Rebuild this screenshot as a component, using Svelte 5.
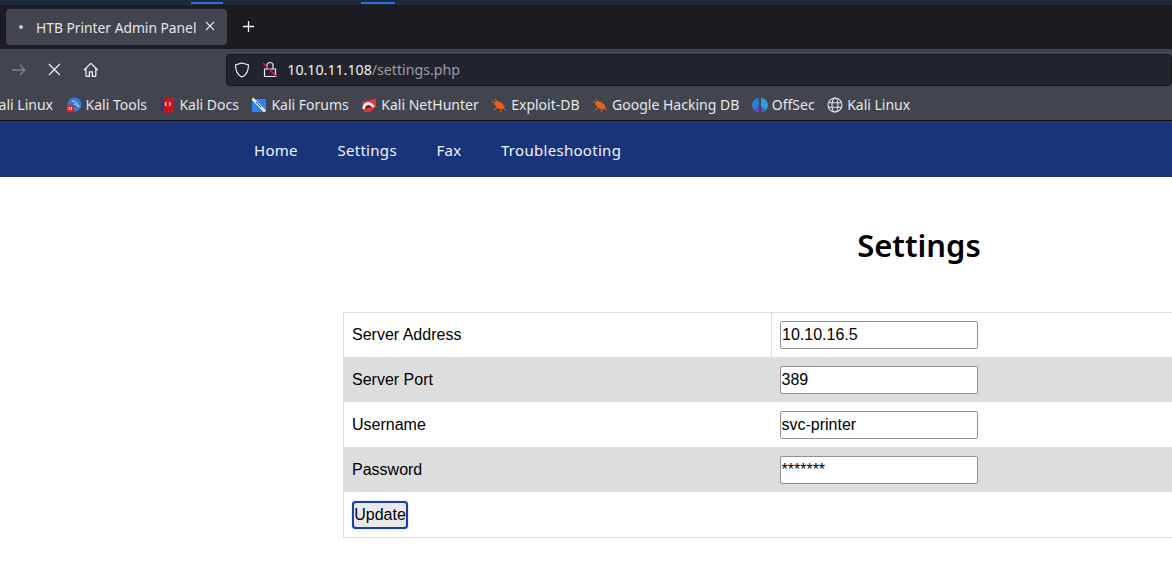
<script>
  const bookmarks = [
    { label: "Kali Tools", icon: "tools" },
    { label: "Kali Docs", icon: "docs" },
    { label: "Kali Forums", icon: "forums" },
    { label: "Kali NetHunter", icon: "nethunter" },
    { label: "Exploit-DB", icon: "bug" },
    { label: "Google Hacking DB", icon: "bug" },
    { label: "OffSec", icon: "offsec" },
    { label: "Kali Linux", icon: "globe" },
  ];
  const links = ["Home", "Settings", "Fax", "Troubleshooting"];
  const fields = [
    { label: "Server Address", value: "10.10.16.5", type: "text" },
    { label: "Server Port", value: "389", type: "text" },
    { label: "Username", value: "svc-printer", type: "text" },
    { label: "Password", value: "*******", type: "text" },
  ];
</script>

<div class="page">
  <div class="strip">
    <span class="mark first"></span>
    <span class="mark second"></span>
  </div>

  <div class="tabbar">
    <div class="tab">
      <span class="dot"></span>
      <span class="tab-title">HTB Printer Admin Panel</span>
      <svg class="tab-close" viewBox="0 0 10 10"><path d="M1 1l8 8M9 1l-8 8" /></svg>
    </div>
    <svg class="newtab" viewBox="0 0 14 14"><path d="M7 1v12M1 7h12" /></svg>
  </div>

  <div class="toolbar">
    <svg class="tool forward" viewBox="0 0 16 16"><path d="M1 8h13M9 3l5 5-5 5" /></svg>
    <svg class="tool stop" viewBox="0 0 14 14"><path d="M1 1l12 12M13 1L1 13" /></svg>
    <svg class="tool home" viewBox="0 0 16 16"><path d="M1 8.2L7 2a1.4 1.4 0 0 1 2 0l6 6.2M3 6.5v7a1 1 0 0 0 1 1h2.5v-4.500h3v4.500H12a1 1 0 0 0 1-1v-7" /></svg>
    <div class="urlbar">
      <svg class="shield" viewBox="0 0 16 16"><path d="M8 1l6.500 2c0 5.500-1 9.500-6.500 12C2.500 12.500 1.500 8.500 1.500 3z" /></svg>
      <svg class="lock" viewBox="0 0 16 16">
        <path class="body" d="M2.500 7.500h11v6.500a1 1 0 0 1-1 1h-9a1 1 0 0 1-1-1zM5 7.500V4a3 3 0 0 1 6 0v3.500" />
        <path class="slash" d="M1 1.500l14 14" />
      </svg>
      <span class="url">10.10.11.108<span class="path">/settings.php</span></span>
    </div>
  </div>

  <div class="bookmarks">
    <span class="bm cut">Kali Linux</span>
    {#each bookmarks as b}
      <span class="bm">
        <svg class="bm-icon" viewBox="0 0 16 16">
          {#if b.icon === "tools"}
            <circle cx="8.5" cy="7.5" r="7" fill="#2f7fd8" />
            <path d="M6 4c3 0 6 2 7 6M8 7c2 0 3 1 4 3" stroke="#cfe3f7" stroke-width="1" fill="none" />
            <circle cx="4.5" cy="11.5" r="4" fill="#e0252b" />
            <path d="M3.2 10v3M5.4 10v3" stroke="#fff" stroke-width="1" />
          {:else if b.icon === "docs"}
            <rect x="1.5" y="0.5" width="13" height="15" fill="#c4161c" />
            <rect x="1.5" y="0.5" width="3" height="15" fill="#1d3f78" />
            <path d="M7.5 5L6 7l1.5 2M10 5l1.5 2L10 9" stroke="#fff" stroke-width="1" fill="none" />
          {:else if b.icon === "forums"}
            <rect x="1" y="2" width="14" height="13" rx="1" fill="#2a85ee" />
            <path d="M1.5 1.5L14 14.5" stroke="#f1f1f1" stroke-width="2.6" />
            <path d="M5 5l5 5" stroke="#333" stroke-width="1" />
          {:else if b.icon === "nethunter"}
            <path d="M1 5L15 1.5V10L9 15H3z" fill="#e9343c" />
            <path d="M2.5 12C3 6 9 4 12.5 10" stroke="#fff" stroke-width="2.4" fill="none" />
            <path d="M5 12c.5-2.5 3-3.5 5-1" stroke="#222" stroke-width="1.2" fill="none" />
          {:else if b.icon === "bug"}
            <ellipse cx="8.5" cy="8.5" rx="5.5" ry="3.2" transform="rotate(30 8.5 8.5)" fill="#e8601c" />
            <path d="M1 4l5 3M4 2l3 4M3 13l4-3M9 13l1 2M13 12l2 1" stroke="#e8701c" stroke-width="1" fill="none" />
          {:else if b.icon === "offsec"}
            <path d="M7 1a7 7 0 0 0 0 14z" fill="#2b7fd0" />
            <path d="M9 1a7 7 0 0 1 0 14z" fill="#2f9fd8" />
            <path d="M7 9v6a7 7 0 0 1-4-2zM9 9v6a7 7 0 0 0 4-2z" fill="#6a3fc8" />
          {:else}
            <g stroke="#e6e6e8" stroke-width="1.1" fill="none">
              <circle cx="8" cy="8" r="7" />
              <ellipse cx="8" cy="8" rx="3" ry="7" />
              <path d="M1.3 5.8h13.4M1.3 10.2h13.4" />
            </g>
          {/if}
        </svg>
        {b.label}
      </span>
    {/each}
  </div>

  <nav class="nav">
    {#each links as link}
      <a href="#top" class="nav-link">{link}</a>
    {/each}
  </nav>

  <main class="content">
    <h1>Settings</h1>
    <table>
      <tbody>
        {#each fields as f}
          <tr>
            <td class="label">{f.label}</td>
            <td><input type={f.type} value={f.value} /></td>
          </tr>
        {/each}
        <tr>
          <td class="label" colspan="2"><button class="update">Update</button></td>
        </tr>
      </tbody>
    </table>
  </main>
</div>

<style>
  :global(body) {
    margin: 0;
    background: #fff;
    overflow: hidden;
  }

  .page {
    width: 1172px;
    height: 585px;
    overflow: hidden;
    font-family: "Noto Sans", "Open Sans", sans-serif;
  }

  .strip {
    height: 5px;
    background: #1d2a3a;
    display: flex;
    align-items: flex-start;
  }

  .mark {
    height: 2px;
    margin-top: 2px;
    background: #2a6de0;
  }

  .mark.first {
    width: 32px;
    margin-left: 191px;
  }

  .mark.second {
    width: 34px;
    margin-left: 138px;
  }

  .tabbar {
    height: 44px;
    background: #1c1b22;
    display: flex;
    align-items: center;
    padding-left: 6px;
    box-sizing: border-box;
    padding-bottom: 1px;
  }

  .tab {
    width: 221px;
    height: 36px;
    box-sizing: border-box;
    background: #42454d;
    border-radius: 4px;
    display: flex;
    align-items: center;
    padding-left: 13px;
    color: #e6e6e8;
  }

  .dot {
    width: 4px;
    height: 4px;
    border-radius: 50%;
    background: #c5c6ca;
    margin-right: 13px;
  }

  .tab-title {
    font-size: 13.8px;
    margin-top: 2px;
    white-space: nowrap;
  }

  .tab-close {
    width: 10px;
    height: 10px;
    margin-left: 9px;
    margin-bottom: 2px;
    stroke: #e6e6e8;
    stroke-width: 1.1;
    fill: none;
  }

  .newtab {
    width: 13px;
    height: 13px;
    margin-left: 15px;
    stroke: #f2f2f2;
    stroke-width: 1.4;
    fill: none;
  }

  .toolbar {
    height: 41px;
    background: #42454d;
    display: flex;
    align-items: center;
    box-sizing: border-box;
    padding-left: 11px;
  }

  .tool {
    fill: none;
    stroke: #f0f0f2;
    stroke-width: 1.3;
  }

  .forward {
    width: 16px;
    height: 16px;
    stroke: #83858b;
  }

  .stop {
    width: 13px;
    height: 13px;
    margin-left: 21px;
  }

  .home {
    width: 16px;
    height: 16px;
    margin-left: 22px;
  }

  .urlbar {
    width: 960px;
    height: 32px;
    margin-left: 128px;
    box-sizing: border-box;
    background: #23252e;
    border: 1px solid #17181c;
    border-radius: 4px;
    display: flex;
    align-items: center;
    padding-left: 7px;
  }

  .shield {
    width: 16px;
    height: 16px;
    fill: none;
    stroke: #eceded;
    stroke-width: 1.2;
  }

  .lock {
    width: 16px;
    height: 17px;
    margin-left: 12px;
    fill: none;
  }

  .lock .body {
    stroke: #eceded;
    stroke-width: 1.2;
  }

  .lock .slash {
    stroke: #e0245e;
    stroke-width: 1.3;
  }

  .url {
    margin-left: 9px;
    margin-bottom: 1px;
    font-size: 14.2px;
    color: #f0f0f2;
  }

  .path {
    color: #9c9ea3;
  }

  .bookmarks {
    height: 30px;
    background: #42454d;
    display: flex;
    align-items: center;
    gap: 12.5px;
    color: #e6e6e8;
    font-size: 14px;
    line-height: 28px;
    white-space: nowrap;
    margin-bottom: 1px;
    box-shadow: 0 1px 0 #111216;
  }

  .bm {
    display: flex;
    align-items: center;
    gap: 4px;
  }

  .bm.cut {
    width: 53px;
    justify-content: flex-end;
    overflow: hidden;
  }

  .bm-icon {
    width: 16px;
    height: 16px;
    flex: none;
    margin-bottom: 1px;
  }

  .nav {
    height: 56px;
    background: #19347a;
    display: flex;
    align-items: center;
    gap: 39.5px;
    padding-left: 254px;
  }

  .nav-link {
    color: #f2f4f8;
    font-size: 15px;
    line-height: 18px;
    margin-top: 1px;
    letter-spacing: 0.3px;
    text-decoration: none;
  }

  .content {
    width: 1152px;
    margin-left: 343px;
  }

  h1 {
    margin: 0;
    padding-top: 49px;
    height: 86px;
    text-align: center;
    font-size: 31px;
    line-height: 38px;
    font-weight: 600;
    color: #000;
  }

  table {
    width: 100%;
    border-collapse: collapse;
    border: 1px solid #ddd;
    font-family: "Liberation Sans", Arial, sans-serif;
    font-size: 16px;
    color: #000;
  }

  tr:nth-child(even) {
    background: #ddd;
  }

  td {
    padding: 9px 8px 8px;
    box-sizing: border-box;
    height: 45px;
  }

  td.label {
    width: 428px;
  }

  tr:first-child td {
    padding: 8px 8px 7px;
    height: 44px;
  }

  tr:last-child td {
    height: 46px;
    vertical-align: top;
  }

  tr:first-child td:first-child {
    border-right: 1px solid #ddd;
  }

  input {
    display: block;
    width: 198px;
    height: 28px;
    box-sizing: border-box;
    padding: 1px;
    border: 1px solid #8f8f9d;
    border-radius: 2px;
    background: #fff;
    font-family: inherit;
    font-size: 16px;
    color: #000;
  }

  .update {
    display: block;
    width: 56px;
    height: 28px;
    padding: 0;
    box-sizing: border-box;
    background: #e9e9ed;
    border: 2px solid #1c3fa0;
    border-radius: 4px;
    box-shadow: 0 0 1px #1c3fa0;
    font-family: inherit;
    font-size: 16px;
    color: #000;
  }
</style>
